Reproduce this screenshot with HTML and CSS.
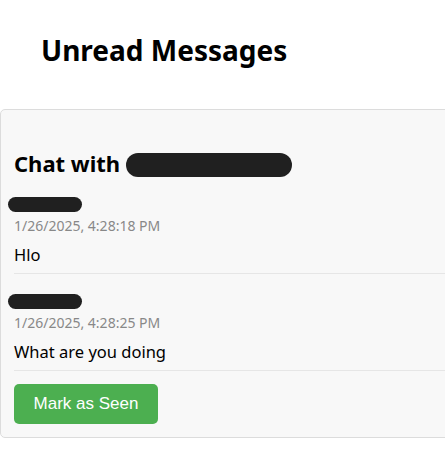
FILE: index.html
```html
<!DOCTYPE html>
<html lang="en">
<head>
<meta charset="utf-8">
<title>Unread Messages</title>
<link rel="stylesheet" href="styles.css">
</head>
<body>
<div class="page">
  <h2 class="page-title">Unread Messages</h2>
  <section class="chat-card">
    <h3 class="chat-title">Chat with <span class="redact redact-title"></span></h3>
    <div class="message">
      <div class="sender"><span class="redact redact-name"></span></div>
      <div class="timestamp">1/26/2025, 4:28:18 PM</div>
      <p class="text">Hlo</p>
    </div>
    <div class="message">
      <div class="sender"><span class="redact redact-name"></span></div>
      <div class="timestamp">1/26/2025, 4:28:25 PM</div>
      <p class="text">What are you doing</p>
    </div>
    <button class="seen-btn" type="button">Mark as Seen</button>
  </section>
</div>
</body>
</html>
```
FILE: styles.css
```css
html, body {
  margin: 0;
  padding: 0;
  overflow: hidden;
  background: #fff;
}
body {
  font-family: "Noto Sans", "Open Sans", sans-serif;
  color: #000;
}
.page {
  width: 480px;
}
.page-title {
  margin: 0;
  padding: 30px 0 0 41px;
  font-size: 28px;
  line-height: 40px;
  font-weight: 700;
}
.chat-card {
  margin-top: 39px;
  border: 1px solid #dcdcdc;
  border-radius: 5px;
  background: #f8f8f8;
  padding: 13px;
}
.chat-title {
  margin: 25px 0 0;
  font-size: 22px;
  line-height: 30px;
  font-weight: 700;
}
.redact {
  display: inline-block;
  background: #202020;
}
.redact-title {
  width: 166px;
  height: 24px;
  border-radius: 12px;
  vertical-align: -5px;
}
.message {
  padding: 14px 0 6px;
  border-bottom: 1px solid #e6e6e6;
}
.message + .message {
  padding-top: 15px;
}
.sender {
  height: 22px;
  line-height: 22px;
}
.redact-name {
  width: 74px;
  height: 15px;
  border-radius: 8px;
  margin-left: -6px;
  vertical-align: middle;
}
.timestamp {
  margin-top: 2px;
  font-size: 14px;
  line-height: 20px;
  color: #888;
}
.text {
  margin: 7px 0 0;
  font-size: 16.5px;
  line-height: 24px;
}
.seen-btn {
  margin-top: 13px;
  width: 144px;
  height: 40px;
  border: none;
  border-radius: 5px;
  background: #4caf50;
  color: #fff;
  font-family: "Liberation Sans", Arial, sans-serif;
  font-size: 17px;
  cursor: pointer;
}
```
